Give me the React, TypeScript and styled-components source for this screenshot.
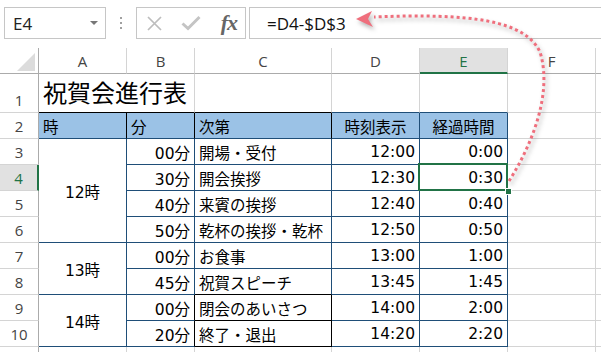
import React from "react";
import styled, { createGlobalStyle } from "styled-components";

const GRID = "#d4d4d4";
const BLUE = "#1f4e78";
const BLACK = "#000";
const GREEN = "#217346";

const GlobalStyle = createGlobalStyle`
  html, body { margin: 0; padding: 0; background: #fff; }
  body { font-family: "Open Sans", "Noto Sans CJK JP", sans-serif; }
`;

const Window = styled.div`
  position: relative;
  width: 601px;
  height: 352px;
  overflow: hidden;
  background: #fff;
`;

const FormulaBar = styled.div`
  display: flex;
  align-items: stretch;
  height: 32px;
  padding: 7px 0 0 4px;
`;

const NameBox = styled.div`
  box-sizing: border-box;
  width: 102px;
  border: 1px solid #c6c6c6;
  display: flex;
  align-items: center;
  justify-content: space-between;
  padding: 0 7px 0 8px;
  font-size: 17px;
  color: #222;
`;

const DropArrow = styled.span`
  width: 0;
  height: 0;
  border-left: 4px solid transparent;
  border-right: 4px solid transparent;
  border-top: 4px solid #777;
`;

const Grip = styled.div`
  width: 30px;
  display: flex;
  flex-direction: column;
  align-items: center;
  justify-content: center;
  gap: 3px;

  span {
    width: 2px;
    height: 2px;
    background: #a0a0a0;
  }
`;

const FxBox = styled.div`
  box-sizing: border-box;
  width: 110px;
  border: 1px solid #c6c6c6;
  display: flex;
  align-items: center;
  padding: 0 8px 0 9px;
  gap: 18px;
`;

const FxLabel = styled.span`
  font-family: "Liberation Serif", "DejaVu Serif", serif;
  font-style: italic;
  font-weight: bold;
  font-size: 22px;
  color: #666;
  margin-left: auto;
  letter-spacing: -1px;
`;

const FormulaInput = styled.div`
  box-sizing: border-box;
  flex: 1;
  margin-left: 3px;
  margin-right: -2px;
  border: 1px solid #c6c6c6;
  display: flex;
  align-items: center;
  padding-left: 17px;
  font-size: 17px;
  color: #111;
`;

const Sheet = styled.div`
  margin-top: 9px;
  display: grid;
  grid-template-columns: 39px 88px 68px 137px 88px 88px 88px 1fr;
  grid-template-rows: 26px 39px repeat(10, 26px);
`;

const Corner = styled.div`
  box-sizing: border-box;
  border-right: 1px solid #ababab;
  border-bottom: 1px solid #ababab;
  display: flex;
  align-items: flex-end;
  justify-content: flex-end;
  padding: 0 3px 2px 0;
`;

const ColHead = styled.div<{ $active?: boolean }>`
  box-sizing: border-box;
  display: flex;
  align-items: center;
  justify-content: center;
  border-right: 1px solid ${GRID};
  border-bottom: ${p => (p.$active ? `2px solid ${GREEN}` : "1px solid #ababab")};
  background: ${p => (p.$active ? "#e1e1e1" : "#fff")};
  color: ${p => (p.$active ? GREEN : "#444")};
  font-size: 15px;
  padding-top: ${p => (p.$active ? "1px" : "0")};
`;

const RowHead = styled.div<{ $active?: boolean; $tall?: boolean }>`
  box-sizing: border-box;
  display: flex;
  align-items: ${p => (p.$tall ? "flex-end" : "center")};
  justify-content: center;
  padding-bottom: ${p => (p.$tall ? "2px" : "0")};
  border-right: ${p => (p.$active ? `2px solid ${GREEN}` : "1px solid #ababab")};
  border-bottom: 1px solid ${GRID};
  background: ${p => (p.$active ? "#e1e1e1" : "#fff")};
  color: ${p => (p.$active ? GREEN : "#444")};
  font-size: 15px;
`;

type Align = "left" | "center" | "right";

const Cell = styled.div<{
  $align?: Align;
  $r?: string;
  $b?: string;
  $bg?: string;
  $rows?: number;
  $cols?: number;
  $title?: boolean;
}>`
  box-sizing: border-box;
  display: flex;
  align-items: center;
  justify-content: ${p =>
    p.$align === "right" ? "flex-end" : p.$align === "center" ? "center" : "flex-start"};
  padding: ${p => (p.$title ? "0 4px 3px" : "0 4px")};
  border-right: 1px solid ${p => p.$r ?? GRID};
  border-bottom: 1px solid ${p => p.$b ?? GRID};
  background: ${p => p.$bg ?? "#fff"};
  grid-row: ${p => (p.$rows ? `span ${p.$rows}` : "auto")};
  grid-column: ${p => (p.$cols ? `span ${p.$cols}` : "auto")};
  font-family: ${p =>
    p.$title ? `"Noto Sans CJK JP", sans-serif` : `"DejaVu Sans", "Noto Sans CJK JP", sans-serif`};
  font-size: ${p => (p.$title ? "24px" : "15.5px")};
  color: #000;
  white-space: nowrap;
  min-width: 0;
`;

const Selection = styled.div`
  position: absolute;
  left: -2px;
  top: -2px;
  right: -1px;
  bottom: -1px;
  border: 2px solid ${GREEN};
  pointer-events: none;
`;

const FillHandle = styled.div`
  position: absolute;
  right: -5px;
  bottom: -5px;
  width: 5px;
  height: 5px;
  background: ${GREEN};
  border: 1px solid #fff;
`;

const SelectedCell = styled(Cell)`
  position: relative;
`;

const ArrowLayer = styled.svg`
  position: absolute;
  left: 0;
  top: 0;
  pointer-events: none;
  filter: drop-shadow(2px 3px 2px rgba(0, 0, 0, 0.3));
`;

const columns = ["A", "B", "C", "D", "E", "F"];

const schedule = [
  { min: "00分", item: "開場・受付", at: "12:00", el: "0:00" },
  { min: "30分", item: "開会挨拶", at: "12:30", el: "0:30" },
  { min: "40分", item: "来賓の挨拶", at: "12:40", el: "0:40" },
  { min: "50分", item: "乾杯の挨拶・乾杯", at: "12:50", el: "0:50" },
  { min: "00分", item: "お食事", at: "13:00", el: "1:00" },
  { min: "45分", item: "祝賀スピーチ", at: "13:45", el: "1:45" },
  { min: "00分", item: "閉会のあいさつ", at: "14:00", el: "2:00" },
  { min: "20分", item: "終了・退出", at: "14:20", el: "2:20" },
];

const hours: Record<number, { label: string; span: number }> = {
  0: { label: "12時", span: 4 },
  4: { label: "13時", span: 2 },
  6: { label: "14時", span: 2 },
};

const CrossIcon = () => (
  <svg width="17" height="17" viewBox="0 0 17 17">
    <path d="M2 2 L15 15 M15 2 L2 15" stroke="#bdbdbd" strokeWidth="1.7" fill="none" />
  </svg>
);

const CheckIcon = () => (
  <svg width="20" height="16" viewBox="0 0 20 16">
    <path d="M1.5 8.5 L7 13.5 L18.5 2" stroke="#c4c4c4" strokeWidth="3" fill="none" />
  </svg>
);

export default function App() {
  return (
    <Window>
      <GlobalStyle />
      <FormulaBar>
        <NameBox>
          E4
          <DropArrow />
        </NameBox>
        <Grip>
          <span />
          <span />
          <span />
        </Grip>
        <FxBox>
          <CrossIcon />
          <CheckIcon />
          <FxLabel>fx</FxLabel>
        </FxBox>
        <FormulaInput>=D4-$D$3</FormulaInput>
      </FormulaBar>

      <Sheet>
        <Corner>
          <svg width="18" height="18" viewBox="0 0 18 18">
            <polygon points="18,0 18,18 0,18" fill="#dcdcdc" />
          </svg>
        </Corner>
        {columns.map(c => (
          <ColHead key={c} $active={c === "E"}>
            {c}
          </ColHead>
        ))}
        <ColHead />

        <RowHead $tall>1</RowHead>
        <Cell $title $cols={2} $b={BLACK}>
          祝賀会進行表
        </Cell>
        <Cell $b={BLACK} />
        <Cell $b={BLUE} />
        <Cell $b={BLUE} />
        <Cell />
        <Cell />

        <RowHead>2</RowHead>
        <Cell $bg="#9bc2e6" $r={BLACK} $b={BLUE}>時</Cell>
        <Cell $bg="#9bc2e6" $r={BLACK} $b={BLUE}>分</Cell>
        <Cell $bg="#9bc2e6" $r={BLACK} $b={BLUE}>次第</Cell>
        <Cell $bg="#9bc2e6" $r={BLUE} $b={BLUE} $align="center">時刻表示</Cell>
        <Cell $bg="#9bc2e6" $r={BLUE} $b={BLUE} $align="center">経過時間</Cell>
        <Cell />
        <Cell />

        {schedule.map((row, i) => {
          const late = i >= 6;
          return (
            <React.Fragment key={i}>
              <RowHead $active={i === 1}>{i + 3}</RowHead>
              {hours[i] && (
                <Cell $rows={hours[i].span} $align="center" $r={BLUE} $b={BLUE}>
                  {hours[i].label}
                </Cell>
              )}
              <Cell $align="right" $r={late ? BLACK : BLUE} $b={BLUE}>
                {row.min}
              </Cell>
              <Cell $r={late ? BLACK : BLUE} $b={i >= 5 ? BLACK : BLUE}>
                {row.item}
              </Cell>
              <Cell $align="right" $r={BLUE} $b={BLUE}>
                {row.at}
              </Cell>
              {i === 1 ? (
                <SelectedCell $align="right" $r={BLUE} $b={BLUE}>
                  {row.el}
                  <Selection />
                  <FillHandle />
                </SelectedCell>
              ) : (
                <Cell $align="right" $r={BLUE} $b={BLUE}>
                  {row.el}
                </Cell>
              )}
              <Cell />
              <Cell />
            </React.Fragment>
          );
        })}

        <RowHead />
        <Cell />
        <Cell />
        <Cell />
        <Cell />
        <Cell />
        <Cell />
        <Cell />
      </Sheet>

      <ArrowLayer width="601" height="352" viewBox="0 0 601 352">
        <path
          d="M509 181 C535 140, 552 90, 540 52 C525 20, 470 13, 374 17"
          fill="none"
          stroke="#ef6f7d"
          strokeWidth="3"
          strokeDasharray="3 3"
        />
        <polygon points="356,19 372,11 368,19 373,27" fill="#ef6f7d" />
      </ArrowLayer>
    </Window>
  );
}
